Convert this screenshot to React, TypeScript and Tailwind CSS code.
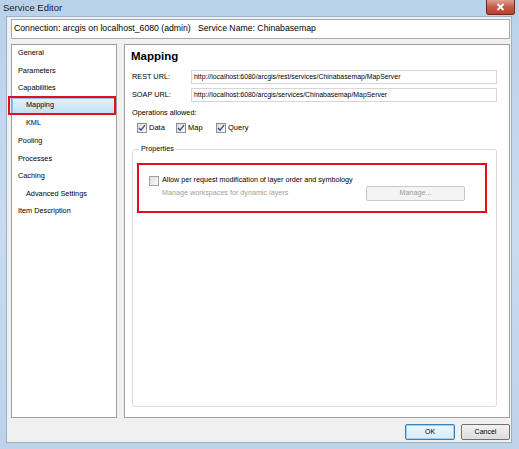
import React from 'react';

const font = { fontFamily: '"Liberation Sans", Arial, sans-serif' };

function Check({ checked }: { checked: boolean }) {
  return (
    <span className="inline-flex w-[10px] h-[10px] border border-[#8e8f8f] bg-gradient-to-br from-[#dcdcdc] to-[#fbfbfb] items-center justify-center">
      {checked && (
        <svg width="8" height="8" viewBox="0 0 8 8">
          <path d="M1 4 L3 6.2 L7 1.2" fill="none" stroke="#2f4f8f" strokeWidth="1.3" />
        </svg>
      )}
    </span>
  );
}

const navItems = [
  { label: 'General', indent: false },
  { label: 'Parameters', indent: false },
  { label: 'Capabilities', indent: false },
  { label: 'Mapping', indent: true, selected: true },
  { label: 'KML', indent: true },
  { label: 'Pooling', indent: false },
  { label: 'Processes', indent: false },
  { label: 'Caching', indent: false },
  { label: 'Advanced Settings', indent: true },
  { label: 'Item Description', indent: false },
];

export default function App() {
  return (
    <div
      className="w-[519px] h-[449px] flex flex-col bg-gradient-to-b from-[#b9d1ea] via-[#c9dcef] to-[#bcd3ea] text-black"
      style={font}
    >
      {/* title bar */}
      <div className="h-[16px] flex items-start justify-between pl-[3px] pr-[4px]">
        <span className="text-[9.5px] leading-[15px] text-[#1e1e1e]">Service Editor</span>
        <div className="w-[29px] h-[15px] rounded-b-[3px] bg-gradient-to-b from-[#e0a08f] via-[#c75a44] to-[#b9412a] border border-[#6e2a1e] border-t-0 flex items-center justify-center">
          <svg width="9" height="8" viewBox="0 0 9 8">
            <path d="M1.5 1 L7.5 7 M7.5 1 L1.5 7" stroke="#fff" strokeWidth="1.8" />
          </svg>
        </div>
      </div>

      {/* client area */}
      <div className="flex-1 ml-[6px] mr-[7px] mb-[6px] bg-[#f0f0f0] border border-[#99b2cc] flex flex-col pt-[2px] pl-[4px] pr-[1px]">
        <div className="h-[20px] bg-white border border-[#a9a9a9] flex items-center pl-[2px] text-[8.7px] whitespace-pre">
          Connection: arcgis on localhost_6080 (admin)   Service Name: Chinabasemap
        </div>

        <div className="flex gap-[7px] mt-[5px] h-[374px]">
          {/* left nav */}
          <div className="w-[106px] bg-white border border-[#a0a0a0] flex flex-col">
            {navItems.map((it) => (
              <div key={it.label} className="relative h-[17.55px] flex items-center">
                {it.selected ? (
                  <>
                    <div className="absolute left-0 right-[1px] top-[0px] h-[16px] bg-gradient-to-b from-[#e3f2fb] to-[#bfe1f4] border border-[#8cc2e6]" />
                    <span className="relative text-[7.3px] pl-[14px] -mt-[1px]">{it.label}</span>
                    <div className="absolute -left-[4px] right-0 -top-[2px] h-[19px] border-2 border-[#e0101c]" />
                  </>
                ) : (
                  <span className={`text-[7.3px] ${it.indent ? 'pl-[14px]' : 'pl-[6px]'}`}>{it.label}</span>
                )}
              </div>
            ))}
          </div>

          {/* right panel */}
          <div className="flex-1 bg-white border border-[#a0a0a0] flex flex-col pl-[6px] pr-[12px]">
            <div className="text-[11.5px] font-bold mt-[2px] leading-[18px]">Mapping</div>
            <div className="flex items-center mt-[5px] h-[14px]">
              <span className="w-[60px] text-[7.3px] pl-[1px]">REST URL:</span>
              <div className="flex-1 h-[14px] border border-[#d6d6d6] flex items-center pl-[2px] text-[6.9px]">
                http://localhost:6080/arcgis/rest/services/Chinabasemap/MapServer
              </div>
            </div>
            <div className="flex items-center mt-[4px] h-[14px]">
              <span className="w-[60px] text-[7.3px] pl-[1px]">SOAP URL:</span>
              <div className="flex-1 h-[14px] border border-[#d6d6d6] flex items-center pl-[2px] text-[6.9px]">
                http://localhost:6080/arcgis/services/Chinabasemap/MapServer
              </div>
            </div>
            <div className="text-[7.3px] mt-[6px] pl-[1px]">Operations allowed:</div>
            <div className="flex items-center mt-[3px] pl-[6px] text-[7.5px]">
              <Check checked />
              <span className="ml-[2px] w-[27px]">Data</span>
              <Check checked />
              <span className="ml-[2px] w-[28px]">Map</span>
              <Check checked />
              <span className="ml-[2px]">Query</span>
            </div>

            {/* Properties group */}
            <div className="relative mt-[16px] h-[258px] border border-[#dcdcdc] rounded-[3px] ml-[1px]">
              <span className="absolute -top-[6px] left-[6px] bg-white px-[2px] text-[7.2px] leading-[10px]">Properties</span>
              <div className="mt-[13px] ml-[4px] mr-[9px] h-[50px] border-2 border-[#e0101c] flex flex-col pl-[10px] pr-[20px]">
                <div className="flex items-center mt-[10px] text-[7.2px]">
                  <span className="inline-flex w-[10px] h-[10px] border border-[#a0a0a0] bg-gradient-to-br from-[#dedede] to-[#fafafa]" />
                  <span className="ml-[3px]">Allow per request modification of layer order and symbology</span>
                </div>
                <div className="flex items-center justify-between mt-[0px] pl-[13px]">
                  <span className="text-[7.2px] text-[#a0a0a0]">Manage workspaces for dynamic layers</span>
                  <div className="w-[99px] h-[15px] border border-[#c8c8c8] bg-[#f4f4f4] rounded-[2px] flex items-center justify-center text-[7.2px] text-[#9a9a9a]">
                    Manage...
                  </div>
                </div>
              </div>
            </div>
          </div>
        </div>

        {/* buttons */}
        <div className="flex justify-end gap-[6px] mt-[6px] pr-[0px]">
          <div className="w-[50px] h-[16px] rounded-[2px] border border-[#3c7fb1] bg-gradient-to-b from-[#eaf6fd] to-[#d9ecf8] shadow-[inset_0_0_0_1px_#9ed3f0] flex items-center justify-center text-[7px]">
            OK
          </div>
          <div className="w-[49px] h-[16px] rounded-[2px] border border-[#707070] bg-gradient-to-b from-[#f2f2f2] to-[#dddddd] flex items-center justify-center text-[7px]">
            Cancel
          </div>
        </div>
      </div>
    </div>
  );
}
